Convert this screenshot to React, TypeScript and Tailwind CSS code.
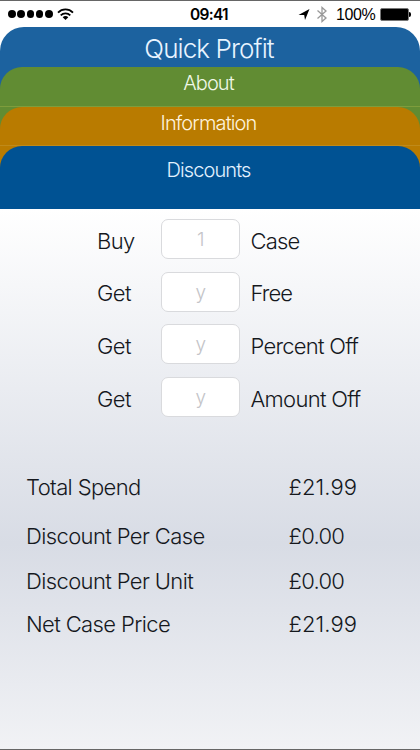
import React from 'react';
import { clsx } from 'clsx';

interface DiscountField {
  prefix: string;
  placeholder: string;
  label: string;
  labelClass: string;
}

interface ResultRow {
  label: string;
  value: string;
  valueClass: string;
  rowClass: string;
}

const fields: DiscountField[] = [
  { prefix: 'Buy', placeholder: '1', label: 'Case', labelClass: 'tracking-[-0.8px]' },
  { prefix: 'Get', placeholder: 'y', label: 'Free', labelClass: 'tracking-[-0.9px]' },
  { prefix: 'Get', placeholder: 'y', label: 'Percent Off', labelClass: 'tracking-[-0.75px]' },
  { prefix: 'Get', placeholder: 'y', label: 'Amount Off', labelClass: 'tracking-[-0.7px]' },
];

const results: ResultRow[] = [
  { label: 'Total Spend', value: '£21.99', valueClass: 'tracking-[0.1px]', rowClass: 'h-[49px]' },
  { label: 'Discount Per Case', value: '£0.00', valueClass: 'tracking-[-0.7px]', rowClass: 'h-[45px]' },
  { label: 'Discount Per Unit', value: '£0.00', valueClass: 'tracking-[-0.7px]', rowClass: 'h-[43px]' },
  { label: 'Net Case Price', value: '£21.99', valueClass: 'tracking-[0.1px]', rowClass: 'h-[43px]' },
];

const StatusBar: React.FC = () => (
  <div className="flex h-[27px] items-center bg-white border-t border-[#666] px-2 text-black">
    <div className="flex w-[182px] items-center gap-[1.8px]">
      {[0, 1, 2, 3, 4].map((i) => (
        <span key={i} className="size-[7.5px] rounded-full bg-black" />
      ))}
      <svg className="ml-[3px]" width="17" height="13" viewBox="0 0 17 13" fill="none" stroke="black">
        <path d="M1 4.6C5.2 .3 11.8 .3 16 4.6" strokeWidth="1.8" />
        <path d="M3.7 7.3C6.4 4.6 10.6 4.6 13.3 7.3" strokeWidth="1.8" />
        <path d="M5.7 9.2C7.3 7.7 9.7 7.7 11.3 9.2L8.5 12Z" fill="black" stroke="none" />
      </svg>
    </div>
    <span className="w-[106px] pt-px text-[15.5px] font-semibold leading-[28px] tracking-[-0.7px]">09:41</span>
    <svg className="ml-[2px]" width="12" height="13" viewBox="0 0 12 13">
      <path d="M11.5 1L7 12L6.2 6.9L.5 6.9Z" fill="black" />
    </svg>
    <svg className="ml-[6px]" width="12" height="17" viewBox="0 0 12 17" fill="none" stroke="#999" strokeWidth="1.3">
      <path d="M1.5 4.5L10 12L6 15.5V1.5L10 5L1.5 12.5" />
    </svg>
    <span className="ml-[8px] w-[44px] whitespace-nowrap pt-px font-['Liberation_Sans',sans-serif] text-[16px] leading-[28px] tracking-[-0.4px]">
      100%
    </span>
    <div className="h-[13px] w-[29px] rounded-[2px] border border-[#777] bg-black" />
    <div className="h-[5px] w-[2px] rounded-r-full bg-black" />
  </div>
);

export default function App() {
  return (
    <div className="flex h-[750px] w-[420px] flex-col overflow-hidden bg-white font-['Inter','Liberation_Sans',sans-serif] font-light">
      <StatusBar />

      {/* Stacked tabs, each one sits on the colour of the tab above it */}
      <div className="h-10 rounded-t-[24px] bg-[#1c629f] pr-[2px] text-center text-[26px] leading-[43px] tracking-[-0.9px] text-[#e8f4ff]">
        Quick Profit
      </div>
      <div className="bg-[#1c629f]">
        <div className="h-[39px] rounded-t-[22px] bg-[#618c33] pr-[3px] text-center text-[20px] leading-[33px] tracking-[-0.9px] text-[#f0f8e8]">
          About
        </div>
      </div>
      <div className="border-t border-[#7e9d3c] bg-[#618c33]">
        <div className="h-[38px] rounded-t-[22px] bg-[#b97b00] pr-[3px] text-center text-[20px] leading-[32px] tracking-[-0.85px] text-[#fff3dc]">
          Information
        </div>
      </div>
      <div className="border-t border-[#bf8a1a] bg-[#b97b00]">
        <div className="h-[62.5px] rounded-t-[22px] bg-[#005293] pr-[3px] text-center text-[20px] leading-[48px] tracking-[-0.9px] text-[#e2f1ff]">
          Discounts
        </div>
      </div>

      <div className="flex flex-1 flex-col border-b border-[#666] bg-linear-to-b from-white via-[#d8dce5] via-62% to-[#f1f2f5] text-[#15181d]">
        <div className="flex flex-col gap-[12.6px] pt-[10.5px] pl-[97px]">
          {fields.map((field, i) => (
            <div key={i} className="flex h-10 items-center text-[22px] leading-[40px] tracking-[-0.6px] whitespace-nowrap">
              <span className="w-16 pt-[3.5px]">{field.prefix}</span>
              <input
                className="h-10 w-[79px] rounded-[7px] border border-[#d9dadd] bg-white pt-[2px] text-center text-[19px] font-light outline-none placeholder:text-[#c4c4c8]"
                placeholder={field.placeholder}
              />
              <span className={clsx('ml-[10.5px] pt-[3.5px]', field.labelClass)}>{field.label}</span>
            </div>
          ))}
        </div>

        <div className="mt-[48.2px] pl-[26px] text-[22px] leading-[44px] tracking-[-0.62px] whitespace-nowrap">
          {results.map((row) => (
            <div key={row.label} className={clsx('flex', row.rowClass)}>
              <span className="w-[262.5px]">{row.label}</span>
              <span className={row.valueClass}>{row.value}</span>
            </div>
          ))}
        </div>
      </div>
    </div>
  );
}
